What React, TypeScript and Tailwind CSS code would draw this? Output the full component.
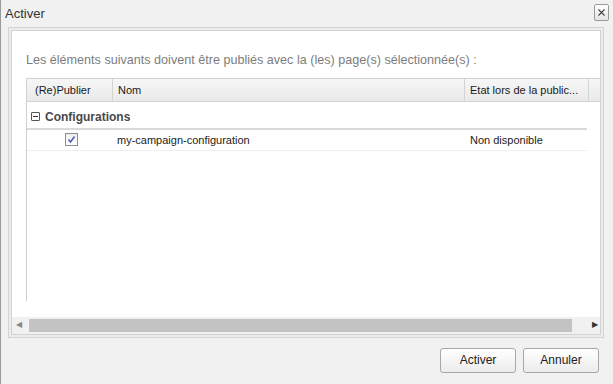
import { X } from 'lucide-react'

const font = { fontFamily: '"Liberation Sans", Arial, sans-serif' }

function Checkbox() {
  return (
    <div className="flex h-[13px] w-[13px] items-center justify-center border border-[#8f8f8f] bg-gradient-to-b from-[#eeeeee] to-[#ffffff]">
      <svg width="9" height="9" viewBox="0 0 9 9">
        <path d="M1.5 4.5 L3.5 7 L7.5 1.5" fill="none" stroke="#4a5fb5" strokeWidth="1.5" />
      </svg>
    </div>
  )
}

export default function App() {
  return (
    <div
      className="flex h-[384px] w-[613px] flex-col border-l border-[#9a9a9a] bg-[#f1f1f1] text-[11px] text-[#222]"
      style={font}
    >
      <div className="flex h-[27px] items-start justify-between pl-[4px] pr-[4px] pt-[4px]">
        <span className="text-[13px] text-[#333]">Activer</span>
        <button
          type="button"
          className="flex h-[17px] w-[15px] items-center justify-center rounded-[2px] border border-[#9a9a9a] bg-gradient-to-b from-white to-[#e4e4e4]"
        >
          <X className="h-[11px] w-[11px] text-[#444]" strokeWidth={2.5} />
        </button>
      </div>

      <div className="ml-[7px] mr-[9px] flex h-[311px] flex-col border border-[#d4d4d4] bg-[#ececec] p-[2px]">
        <div className="flex flex-1 flex-col border border-[#d2d2d2] bg-white">
          <p className="mt-[20px] pl-[14px] text-[12.6px] text-[#7d7d7d]">
            Les éléments suivants doivent être publiés avec la (les) page(s) sélectionnée(s) :
          </p>

          <div className="ml-[14px] mt-[8px] flex flex-1 flex-col border-l border-t border-[#d0d0d0]">
            <div className="flex h-[23px] items-stretch border-b border-[#d2d2d2] bg-gradient-to-b from-[#f7f7f7] to-[#e9e9e9] text-[#1a1a1a]">
              <div className="flex w-[86px] items-center border-r border-[#d4d4d4] pl-[8px]">(Re)Publier</div>
              <div className="flex w-[352px] items-center border-r border-[#d4d4d4] pl-[5px]">Nom</div>
              <div className="flex w-[124px] items-center border-r border-[#d4d4d4] pl-[5px]">
                Etat lors de la public...
              </div>
              <div className="flex-1" />
            </div>

            <div className="flex h-[26px] items-center pl-[4px] pt-[4px]">
              <span className="mr-[5px] flex h-[9px] w-[9px] items-center justify-center rounded-[1px] border border-[#555] bg-white">
                <span className="h-[1px] w-[5px] bg-[#333]" />
              </span>
              <span className="font-bold text-[12px] text-[#484848]">Configurations</span>
            </div>

            <div className="mr-[13px] flex h-[23px] items-center border-b border-t-2 border-[#eeeeee] border-t-[#d9d9d9]">
              <div className="flex w-[86px] justify-center pl-[2px]">
                <Checkbox />
              </div>
              <div className="w-[352px] pl-[4px]">my-campaign-configuration</div>
              <div className="pl-[5px]">Non disponible</div>
            </div>

            <div className="flex-1" />
          </div>

          <div className="mt-[16px] flex h-[17px] items-center bg-[#f1f1f1] px-[4px] pb-[1px]">
            <span className="w-[12px] text-[8px] text-[#888]">◀</span>
            <div className="mx-[1px] h-[13px] flex-1 bg-[#c3c3c3]" />
            <span className="ml-[19px] w-[4px] text-[8px] text-[#333]">▶</span>
          </div>
        </div>
      </div>

      <div className="flex flex-1 items-center justify-end gap-[7px] pb-[2px] pr-[14px]">
        <button
          type="button"
          className="h-[25px] w-[76px] rounded-[3px] border border-[#a7a7a7] bg-gradient-to-b from-white to-[#ececec] text-[12px] text-[#222]"
        >
          Activer
        </button>
        <button
          type="button"
          className="h-[25px] w-[76px] rounded-[3px] border border-[#a7a7a7] bg-gradient-to-b from-white to-[#ececec] text-[12px] text-[#222]"
        >
          Annuler
        </button>
      </div>
    </div>
  )
}
